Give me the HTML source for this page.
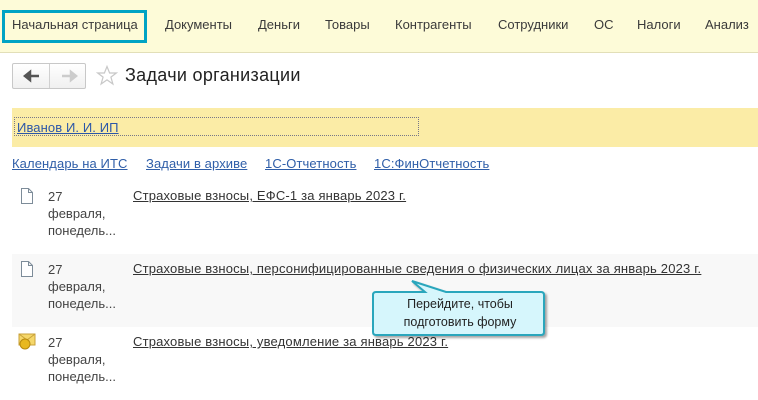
<!DOCTYPE html><html><head><meta charset="utf-8"><style>
body{margin:0;width:758px;height:400px;overflow:hidden;background:#fff;font-family:"Liberation Sans",Arial,sans-serif;font-size:13px;color:#333;position:relative}
.a{position:absolute;white-space:nowrap}
.top{position:absolute;left:0;top:0;width:758px;height:52px;background:#fdfbd8;border-bottom:1px solid #e2dfb8}
.nav{top:17px;font-size:13px;color:#3a3a3a}
.hl{position:absolute;left:2px;top:10px;width:139px;height:27px;border:3px solid #00a3c4}
.lnk{color:#2f5ea8;text-decoration:underline;letter-spacing:.1px}
.tl{color:#333;text-decoration:underline;letter-spacing:.18px}
.d{color:#444;line-height:17px}
</style></head><body>
<div class="top"></div>
<div class="hl"></div>
<div class="a nav" style="left:12px">Начальная страница</div>
<div class="a nav" style="left:165px">Документы</div>
<div class="a nav" style="left:258px">Деньги</div>
<div class="a nav" style="left:325px">Товары</div>
<div class="a nav" style="left:395px">Контрагенты</div>
<div class="a nav" style="left:498px">Сотрудники</div>
<div class="a nav" style="left:594px">ОС</div>
<div class="a nav" style="left:637px">Налоги</div>
<div class="a nav" style="left:705px">Анализ</div>
<div class="a" style="left:12px;top:63px;width:72px;height:24px;border:1px solid #c8c8c8;border-radius:2px;background:linear-gradient(#fff,#f0f0f0)"></div>
<div class="a" style="left:49px;top:64px;width:1px;height:24px;background:#d0d0d0"></div>
<svg class="a" style="left:22px;top:69px" width="20" height="14"><path d="M3 7H17M3 7L8 3V11Z" stroke="#555" stroke-width="2.5" fill="#555"/></svg>
<svg class="a" style="left:59px;top:69px" width="20" height="14"><path d="M3 7H17M17 7L12 3V11Z" stroke="#ccc" stroke-width="2.5" fill="#ccc"/></svg>
<svg class="a" style="left:96px;top:65px" width="22" height="21"><path d="M11 1.5L13.6 8H20.3L14.9 12.1L16.9 19L11 14.9L5.1 19L7.1 12.1L1.7 8H8.4Z" fill="none" stroke="#c8c8c8" stroke-width="1.2"/></svg>
<div class="a" style="left:125px;top:65px;font-size:18px;letter-spacing:.3px;color:#222">Задачи организации</div>
<div class="a" style="left:12px;top:108px;width:746px;height:39px;background:#fbeca6"></div>
<div class="a" style="left:14px;top:117px;width:403px;height:17px;border:1px dotted #778"></div>
<div class="a lnk" style="left:17px;top:120px;color:#2b56a8">Иванов И. И. ИП</div>
<div class="a lnk" style="left:12px;top:156px">Календарь на ИТС</div>
<div class="a lnk" style="left:146px;top:156px">Задачи в архиве</div>
<div class="a lnk" style="left:265px;top:156px">1С-Отчетность</div>
<div class="a lnk" style="left:374px;top:156px">1С:ФинОтчетность</div>
<div class="a" style="left:12px;top:254px;width:746px;height:73px;background:#f8f8f8"></div>
<svg class="a" style="left:20px;top:188px" width="14" height="16"><path d="M1.5 .5H8.5L12.5 4.5V15.5H1.5Z M8.5 .5V4.5H12.5" fill="#fff" stroke="#7d8c99"/></svg>
<div class="a d" style="left:48px;top:188px">27<br>февраля,<br>понедель...</div>
<div class="a tl" style="left:133px;top:188px">Страховые взносы, ЕФС-1 за январь 2023 г.</div>
<svg class="a" style="left:20px;top:261px" width="14" height="16"><path d="M1.5 .5H8.5L12.5 4.5V15.5H1.5Z M8.5 .5V4.5H12.5" fill="#fff" stroke="#7d8c99"/></svg>
<div class="a d" style="left:48px;top:261px">27<br>февраля,<br>понедель...</div>
<div class="a tl" style="left:133px;top:261px">Страховые взносы, персонифицированные сведения о физических лицах за январь 2023 г.</div>
<svg class="a" style="left:18px;top:333px" width="18" height="17"><rect x="1" y="1" width="16" height="11" fill="#f5d76a" stroke="#c9a23a"/><path d="M1 1L9 7L17 1" fill="none" stroke="#c9a23a"/><circle cx="7" cy="11" r="5" fill="#e8b820" stroke="#b88a10"/></svg>
<div class="a d" style="left:48px;top:334px">27<br>февраля,<br>понедель...</div>
<div class="a tl" style="left:133px;top:334px">Страховые взносы, уведомление за январь 2023 г.</div>
<svg class="a" style="left:366px;top:275px" width="187" height="66"><path d="M10 17H59L46 6L80 17H175Q178 17 178 20V57Q178 60 175 60H10Q7 60 7 57V20Q7 17 10 17Z" fill="#d6f6fc" stroke="#2aa6bc" stroke-width="2" filter="drop-shadow(2px 2px 1px rgba(0,0,0,.35))"/></svg>
<div class="a" style="left:373px;top:295px;width:174px;text-align:center;font-size:12.5px;line-height:18px;color:#222">Перейдите, чтобы<br>подготовить форму</div>
</body></html>
